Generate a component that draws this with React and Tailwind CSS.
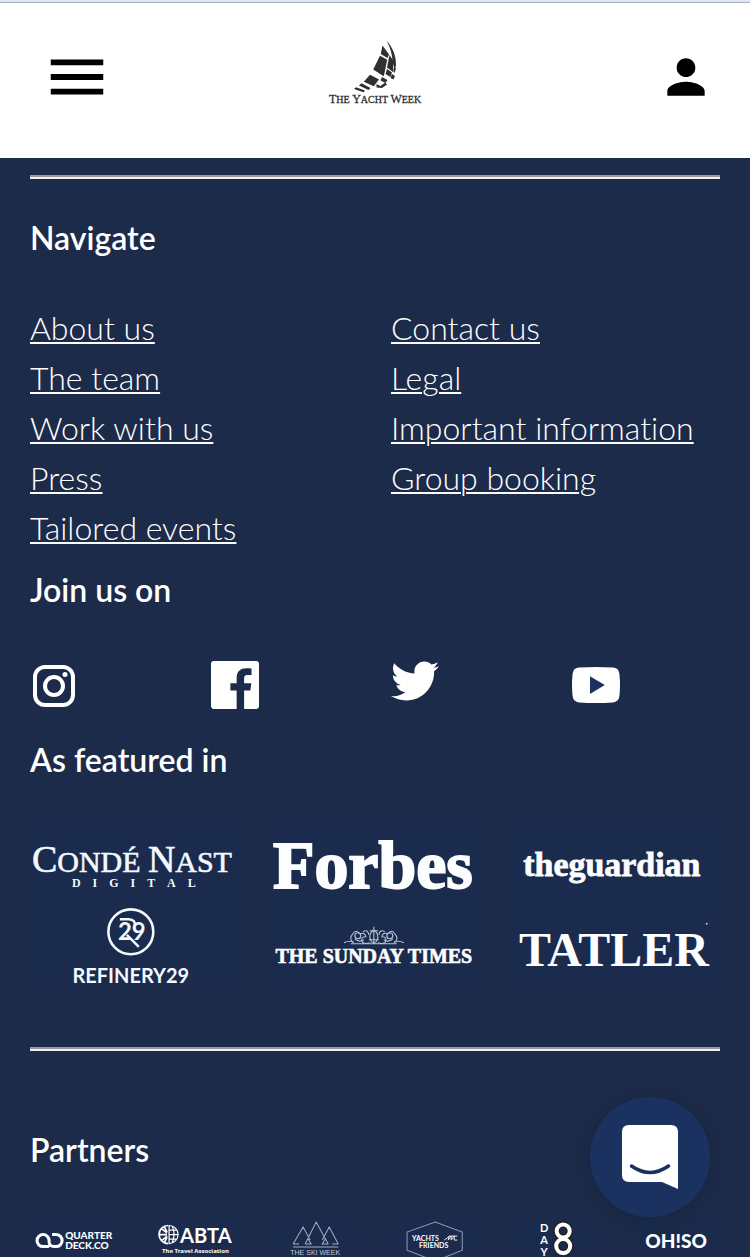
import React from "react";
import { MdMenu, MdPerson } from "react-icons/md";

const linkColumns = [
  ["About us", "The team", "Work with us", "Press", "Tailored events"],
  ["Contact us", "Legal", "Important information", "Group booking"],
];

const serif = "font-['Liberation_Serif',serif]";
const lato = "font-['Lato',sans-serif]";

function YachtWeekLogo() {
  return (
    <svg viewBox="0 0 100 78" className={`h-[78px] w-[100px] ${serif}`} role="img" aria-label="The Yacht Week" fill="#303033">
      <path d="M57.5 7.5L64 16.5L62.4 20L55.8 16Z" />
      <path d="M55 17.8L62.2 21.7L58.8 38.2L48.2 31.6Z" />
      <path d="M45 36.7L54 41.4L48.8 48.2L38.8 43.8Z" />
      <path d="M36.5 45.2L45.5 50L43.5 52L34 47.6ZM31 49.2L40 52.4L38.5 54.2L29 51Z" />
      <path d="M61.5 2.5C68 10 71.3 18 71 28L69.5 30L67.5 24C67.5 16 65 9 61.5 2.5Z" />
      <path d="M64.5 17L68.5 23L68 34L62 29.500Z" />
      <path d="M62 31L67 34.5L65.5 39L60.5 36ZM69.5 28L71 30.5L69.5 35L68.2 33Z" />
      <path d="M57 39L62.5 42L60.5 45L55.5 42.5ZM67 36L70 38L68.5 41.5L65.5 40Z" />
      <path d="M51.5 46L55.5 48L60 44.500L62 46.5L57 50L51.5 49.5Z" />
      <text x="4" y="65" fontSize="10" stroke="#303033" strokeWidth="0.3">
        <tspan fontSize="12">T</tspan>HE <tspan fontSize="12">Y</tspan>ACHT <tspan fontSize="12">W</tspan>EEK
      </text>
    </svg>
  );
}

function Instagram() {
  return (
    <svg viewBox="0 0 48 48" className="mt-px size-12" fill="none" stroke="#fff" strokeWidth="4" aria-hidden="true">
      <rect x="5" y="5" width="38" height="38" rx="10" />
      <circle cx="24" cy="24" r="9" />
      <circle cx="35" cy="12.5" r="2.5" fill="#fff" stroke="none" />
    </svg>
  );
}

function Facebook() {
  return (
    <svg viewBox="0 0 24 24" className="size-12" fill="#fff" aria-hidden="true">
      <path d="M22.676 0H1.324C.593 0 0 .593 0 1.324v21.352C0 23.408.593 24 1.324 24h11.494v-9.294H9.689v-3.621h3.129V8.41c0-3.099 1.894-4.785 4.659-4.785 1.325 0 2.464.097 2.796.141v3.24h-1.921c-1.5 0-1.792.721-1.792 1.771v2.311h3.584l-.465 3.63H16.56V24h6.115c.733 0 1.325-.592 1.325-1.324V1.324C24 .593 23.408 0 22.676 0" />
    </svg>
  );
}

function Twitter() {
  return (
    <svg viewBox="0 48 512 416" className="h-10 w-12" fill="#fff" aria-hidden="true">
      <path d="M459.37 151.716c.325 4.548.325 9.097.325 13.645 0 138.72-105.583 298.558-298.558 298.558-59.452 0-114.68-17.219-161.137-47.106 8.447.974 16.568 1.299 25.34 1.299 49.055 0 94.213-16.568 130.274-44.832-46.132-.975-84.792-31.188-98.112-72.772 6.498.974 12.995 1.624 19.818 1.624 9.421 0 18.843-1.3 27.614-3.573-48.081-9.747-84.143-51.98-84.143-102.985v-1.299c13.969 7.797 30.214 12.67 47.431 13.319-28.264-18.843-46.781-51.005-46.781-87.391 0-19.492 5.197-37.36 14.294-52.954 51.655 63.675 129.3 105.258 216.365 109.807-1.624-7.797-2.599-15.918-2.599-24.04 0-57.828 46.782-104.934 104.934-104.934 30.213 0 57.502 12.67 76.67 33.137 23.715-4.548 46.456-13.32 66.599-25.34-7.798 24.366-24.366 44.833-46.132 57.827 21.117-2.273 41.584-8.122 60.426-16.243-14.292 20.791-32.161 39.308-52.628 54.253z" />
    </svg>
  );
}

function YouTube() {
  return (
    <svg viewBox="0 0 48 48" className="size-12" aria-hidden="true">
      <path fill="#fff" d="M7 6.6Q24 5.4 41 6.6Q46.6 7 47.4 13Q48.6 24 47.4 35Q46.6 41 41 41.4Q24 42.6 7 41.4Q1.4 41 .6 35Q-.6 24 .6 13Q1.4 7 7 6.6Z" />
      <path fill="#1b315f" d="M18 15.2L32.8 24L18 33Z" />
    </svg>
  );
}

const socials = [
  { name: "Instagram", Icon: Instagram },
  { name: "Facebook", Icon: Facebook },
  { name: "Twitter", Icon: Twitter },
  { name: "YouTube", Icon: YouTube },
];

function CondeRefinery() {
  return (
    <svg viewBox="0 0 209 166" className="w-full bg-[#1a2b4d]" fill="#f4f8ff">
      <g className={serif}>
        <text x="2" y="50" fontSize="30" stroke="#f4f8ff" strokeWidth="0.6">
          <tspan fontSize="38">C</tspan>ONDÉ <tspan fontSize="38">N</tspan>AST
        </text>
        <text x="104" y="65" fontSize="12" fontWeight="700" textAnchor="middle">D{"\u2003"}I{"\u2003"}G{"\u2003"}I{"\u2003"}T{"\u2003"}A{"\u2003"}L</text>
      </g>
      <g className={lato} fontWeight="700" textAnchor="middle">
        <circle cx="101" cy="110" r="22.5" fill="none" stroke="#f4f8ff" strokeWidth="2.6" />
        <text x="102" y="118" fontSize="24">29</text>
        <path d="M90 97.500H99Q106 98 105 104M97 113L109 125" fill="none" stroke="#f4f8ff" strokeWidth="2.5" />
        <text x="101" y="161" fontSize="20">REFINERY29</text>
      </g>
    </svg>
  );
}

function ForbesTimes() {
  return (
    <svg viewBox="0 0 209 166" className="w-full bg-[#1a2b4d]" fill="#fbfdff">
      <g className={serif} fontWeight="700" textAnchor="middle">
        <text x="102" y="66" fontSize="68" stroke="#fbfdff" strokeWidth="2">Forbes</text>
        <text x="103" y="141" fontSize="20" stroke="#fbfdff" strokeWidth="0.6">THE SUNDAY TIMES</text>
      </g>
      <g fill="none" stroke="#b9c3d3" strokeWidth="1.1">
        <path d="M73 121q6-3 10 0q-6-4-1-9q3-5 7 0q5-2 6 3q-5 0-4 4t8 2M133 121q-6-3-10 0q6-4 1-9q-3-5-7 0q-5-2-6 3q5 0 4 4t-8 2" />
        <circle cx="87" cy="114" r="3" />
        <circle cx="119" cy="114" r="3" />
        <ellipse cx="103" cy="115" rx="4" ry="6" />
        <path d="M103 105v17M99 109h8M80 122h46M92 110q5-3 6 3M114 110q-5-3-6 3M84 117q4 4 9 1M122 117q-4 4-9 1M98 118h10" />
      </g>
    </svg>
  );
}

function GuardianTatler() {
  return (
    <svg viewBox="0 0 209 166" className="w-full bg-[#1a2b4d]" fill="#fbfdff">
      <g className={serif} fontWeight="700" textAnchor="middle">
        <text x="101" y="54" fontSize="34" stroke="#fbfdff" strokeWidth="0.8">theguardian</text>
        <text x="103" y="144" fontSize="48">TATLER</text>
      </g>
      <circle cx="196" cy="102" r="1" fill="#b9c3d3" />
    </svg>
  );
}

const partnerBox = "w-full bg-[#1a2b4d]";

function QuarterDeck() {
  return (
    <svg viewBox="0 0 88 88" className={partnerBox} fill="#fff">
      <path d="M19 26.500H13a6 6 0 1 1 6-6v1q0 5 5 5h2a6 6 0 0 0 0-12h-4" fill="none" stroke="#fff" strokeWidth="3" />
      <g className={lato} fontWeight="900" fontSize="10">
        <text x="35" y="19">QUARTER</text>
        <text x="35" y="29">DECK.CO</text>
      </g>
    </svg>
  );
}

function Abta() {
  return (
    <svg viewBox="0 0 88 88" className={partnerBox} fill="#fff">
      <path d="M18 5.500a9 9 0 0 0 0 18M17 14.500H9M17 13L11 8M17 16L11 21M17 12L14 6M17 17L14 23" fill="none" stroke="#fff" strokeWidth="1.7" />
      <path d="M19 5.500a9 9 0 0 1 0 18zM19 10h8M19 14.500h9M19 19h8M22 6q4 8 0 17" fill="none" stroke="#fff" strokeWidth="1.2" />
      <text x="30" y="23" fontSize="20" fontWeight="700" className={lato}>ABTA</text>
      <text x="12" y="33" fontSize="6" fontWeight="700" className="font-['Noto_Sans',sans-serif]">The Travel Association</text>
    </svg>
  );
}

function SkiWeek() {
  return (
    <svg viewBox="0 0 88 88" className={partnerBox} fill="#c3cad6">
      <path d="M22 24L32 7L39 20M34 24L45 2L57 24M51 20L58 7L67 24M22 24h6M34 24h6l-3-5M57 24h-6l3-5M61 24h6M22 27H67" fill="none" stroke="#a5aec0" strokeWidth="1" />
      <text x="44" y="35" fontSize="7" textAnchor="middle" className="font-['Liberation_Sans',sans-serif]">THE SKI WEEK</text>
    </svg>
  );
}

function YachtsFriends() {
  return (
    <svg viewBox="0 0 88 88" className={partnerBox} fill="#fff">
      <path d="M44 2L71 12V30L44 41L16 30V12Z" fill="none" stroke="#8f9bb1" strokeWidth="1" />
      <g className={lato} fontSize="7" fontWeight="700">
        <text x="21" y="21">YACHTS</text>
        <text x="28" y="28">FRIENDS</text>
      </g>
      <path d="M53 20l3-2l2-2l-1 4l3-4v4l3-4v4h3M58 16h8" fill="none" stroke="#fff" strokeWidth="0.9" />
    </svg>
  );
}

function DayEight() {
  return (
    <svg viewBox="0 0 88 88" className={partnerBox} fill="#fff">
      <g className={lato} fontSize="11" fontWeight="700" textAnchor="middle">
        <text x="33" y="12">D</text>
        <text x="33" y="24">A</text>
        <text x="33" y="36">Y</text>
      </g>
      <g fill="none" stroke="#222" strokeWidth="7">
        <circle cx="52" cy="11" r="6.500" />
        <circle cx="52" cy="26" r="7" />
      </g>
      <g fill="none" stroke="#fff" strokeWidth="4">
        <circle cx="52" cy="11" r="6.500" />
        <circle cx="52" cy="26" r="7" />
      </g>
    </svg>
  );
}

function OhSo() {
  return (
    <svg viewBox="0 0 88 88" className={partnerBox} fill="#fff">
      <text x="44" y="28" fontSize="19" fontWeight="900" textAnchor="middle" className={lato}>OH!SO</text>
    </svg>
  );
}

function Divider() {
  return <hr className="h-1 border-t-2 border-b-2 border-t-[#999] border-b-[#eee]" />;
}

function Heading({ children }) {
  return <h2 className="text-[32px] leading-[50px] font-semibold">{children}</h2>;
}

export default function App() {
  return (
    <div className="flex h-screen flex-col bg-[#1d2b4a] font-['Lato',sans-serif] text-white">
      <header className="shrink-0 bg-white">
        <div className="h-[3px] border-b border-[#b0b0b4] bg-[#d9e6fb]" />
        <div className="grid h-[155px] grid-cols-3 items-center px-9 pb-[7px] text-black">
          <button type="button" aria-label="Menu" className="ml-[6px] justify-self-start">
            <MdMenu className="size-[70px]" />
          </button>
          <a href="#home" className="justify-self-center">
            <YachtWeekLogo />
          </a>
          <button type="button" aria-label="Account" className="justify-self-end">
            <MdPerson className="size-14" />
          </button>
        </div>
      </header>

      <main className="min-h-0 flex-1 overflow-hidden px-[30px] pt-[17px]">
        <Divider />
        <section className="pt-[34px]">
          <Heading>Navigate</Heading>
          <nav className="mt-10 grid grid-cols-2 gap-8">
            {linkColumns.map((links) => (
              <ul key={links[0]}>
                {links.map((label) => (
                  <li key={label} className="text-[32px] leading-[50px] font-light whitespace-nowrap [font-variant-ligatures:none]">
                    <a href="#page" className="underline decoration-2 underline-offset-2">{label}</a>
                  </li>
                ))}
              </ul>
            ))}
          </nav>
        </section>

        <section className="pt-3">
          <Heading>Join us on</Heading>
          <div className="mt-[46px] grid h-[50px] grid-cols-4 items-start gap-8">
            {socials.map(({ name, Icon }) => (
              <a key={name} href="#social" aria-label={name} className="justify-self-start">
                <Icon />
              </a>
            ))}
          </div>
        </section>

        <section className="pt-6 pb-[59px]">
          <Heading>As featured in</Heading>
          <div className="mt-[37px] grid grid-cols-3 gap-8">
            <CondeRefinery />
            <ForbesTimes />
            <GuardianTatler />
          </div>
        </section>

        <Divider />
        <section className="pt-[74px]">
          <Heading>Partners</Heading>
          <div className="mt-[45px] grid grid-cols-6 gap-8">
            <QuarterDeck />
            <Abta />
            <SkiWeek />
            <YachtsFriends />
            <DayEight />
            <OhSo />
          </div>
        </section>
      </main>

      <button
        type="button"
        aria-label="Open chat"
        className="fixed right-10 bottom-10 flex size-[120px] items-center justify-center rounded-full bg-[#1b3160] shadow-[0_2px_32px_rgba(0,0,0,0.16)]"
      >
        <svg viewBox="0 0 56 64" className="h-16 w-14" aria-hidden="true">
          <path fill="#fff" d="M7 0H49Q56 0 56 7V64L40 57H7Q0 57 0 50V7Q0 0 7 0Z" />
          <path d="M9.500 41Q28 54 46.500 41" fill="none" stroke="#1b3160" strokeWidth="3.500" strokeLinecap="round" />
        </svg>
      </button>
    </div>
  );
}
